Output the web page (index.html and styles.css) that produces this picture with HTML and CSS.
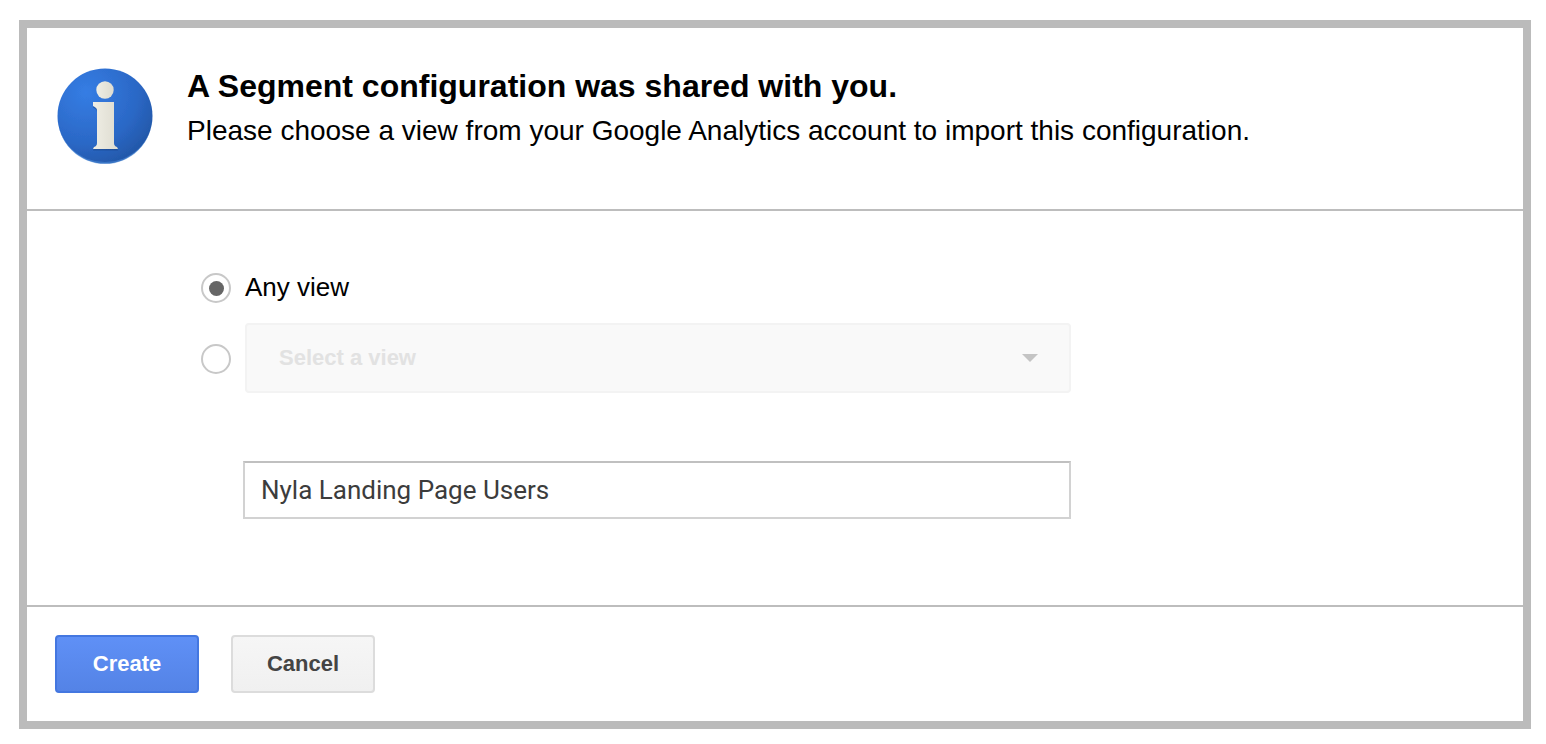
FILE: index.html
```html
<!DOCTYPE html>
<html lang="en">
<head>
<meta charset="utf-8">
<title>Segment configuration</title>
<link rel="stylesheet" href="styles.css">
</head>
<body>
<div class="frame">
  <header class="header">
    <svg class="info-icon" viewBox="0 0 96 96" width="96" height="96" aria-hidden="true">
      <defs>
        <radialGradient id="disc" cx="0.3" cy="0.25" r="0.9">
          <stop offset="0" stop-color="#357de4"/>
          <stop offset="0.6" stop-color="#2b68c6"/>
          <stop offset="1" stop-color="#20529f"/>
        </radialGradient>
        <linearGradient id="glyph" x1="0" y1="0" x2="1" y2="0">
          <stop offset="0" stop-color="#efeee5"/>
          <stop offset="1" stop-color="#dedcd0"/>
        </linearGradient>
        <filter id="soft" x="-5%" y="-5%" width="110%" height="110%">
          <feGaussianBlur stdDeviation="0.5"/>
        </filter>
      </defs>
      <g filter="url(#soft)">
        <circle cx="48" cy="48" r="47.500" fill="url(#disc)"/>
        <path d="M1 50a47 46 0 0 0 94 0a47 44 0 0 1-94 0z" fill="#4a8ad8" opacity=".55"/>
        <circle cx="48" cy="22" r="8.700" fill="url(#glyph)"/>
        <path d="M36 34.500H57V75Q57 78 60 79L61 81H36L37 79Q40 78 40 75V42Q40 40 36 38Z" fill="#173f7c" opacity=".45" transform="translate(0 1.500)"/>
        <path d="M36 34H57V75Q57 78 60 79L61 81H36L37 79Q40 78 40 75V42Q40 40 36 38Z" fill="url(#glyph)"/>
      </g>
    </svg>
    <div class="header-text">
      <h1 class="title">A Segment configuration was shared with you.</h1>
      <p class="subtitle">Please choose a view from your Google Analytics account to import this configuration.</p>
    </div>
  </header>
  <main class="main">
    <div class="option option-any">
      <span class="radio radio-on"></span>
      <span class="any-label">Any view</span>
    </div>
    <div class="option option-select">
      <span class="radio"></span>
      <div class="select">
        <span class="select-label">Select a view</span>
        <span class="select-arrow"></span>
      </div>
    </div>
    <div class="name-field">Nyla Landing Page Users</div>
  </main>
  <footer class="footer">
    <button class="btn btn-primary" type="button">Create</button>
    <button class="btn btn-default" type="button">Cancel</button>
  </footer>
</div>
</body>
</html>
```
FILE: styles.css
```css
* { box-sizing: border-box; }
html, body { margin: 0; padding: 0; background: #fff; }
body {
  width: 1546px;
  height: 744px;
  padding: 20px 15px 15px 19px;
  font-family: "Liberation Sans", Arial, sans-serif;
  color: #000;
  overflow: hidden;
}
.frame {
  width: 1512px;
  height: 709px;
  border: 8px solid #bbb;
  display: flex;
  flex-direction: column;
  background: #fff;
}
.header {
  height: 183px;
  flex: none;
  border-bottom: 2px solid #bdbdbd;
  display: flex;
  align-items: flex-start;
  padding: 40px 0 0 30px;
  gap: 34px;
}
.info-icon { flex: none; display: block; }
.header-text { margin-top: -1px; }
.title {
  margin: 0;
  font-size: 32px;
  line-height: 38px;
  font-weight: 700;
}
.subtitle {
  margin: 8px 0 0;
  font-size: 28px;
  line-height: 36px;
}
.main {
  height: 396px;
  flex: none;
  border-bottom: 2px solid #bdbdbd;
  padding: 58px 0 0 174px;
  display: flex;
  flex-direction: column;
}
.option { display: flex; align-items: center; gap: 14px; }
.option-any { height: 36px; }
.any-label { font-size: 26px; line-height: 36px; }
.option-select { margin-top: 18px; height: 70px; }
.radio {
  width: 30px;
  height: 30px;
  flex: none;
  margin-top: 2px;
  border: 2px solid #c8c8c8;
  border-radius: 50%;
  background: #fff;
  display: flex;
  align-items: center;
  justify-content: center;
}
.radio-on::after {
  content: "";
  width: 15px;
  height: 15px;
  border-radius: 50%;
  background: #666;
}
.select {
  width: 826px;
  height: 70px;
  border: 2px solid #f3f3f3;
  border-radius: 4px;
  background: #f9f9f9;
  display: flex;
  align-items: center;
  justify-content: space-between;
  padding: 0 31px 0 32px;
}
.select-label { font-size: 22px; font-weight: 700; color: #e2e2e2; }
.select-arrow {
  width: 0;
  height: 0;
  border-left: 8px solid transparent;
  border-right: 8px solid transparent;
  border-top: 8px solid #c4c4c4;
}
.name-field {
  margin: 68px 0 0 42px;
  width: 828px;
  height: 58px;
  border: 2px solid #d2d2d2;
  border-top-color: #c0c0c0;
  padding-left: 16px;
  font-family: Roboto, sans-serif;
  font-size: 26px;
  line-height: 54px;
  color: #3c3c3c;
}
.footer {
  flex: 1;
  display: flex;
  align-items: flex-start;
  gap: 32px;
  padding: 28px 0 0 28px;
}
.btn {
  width: 144px;
  height: 58px;
  border-radius: 4px;
  font-family: inherit;
  font-size: 22px;
  font-weight: 700;
  padding: 0;
}
.btn-primary {
  border: 2px solid #4477e0;
  background: linear-gradient(#5f90f6, #5483e6);
  color: #fff;
}
.btn-default {
  border: 2px solid #dcdcdc;
  background: linear-gradient(#f6f6f6, #f0f0f0);
  color: #444;
}
```
